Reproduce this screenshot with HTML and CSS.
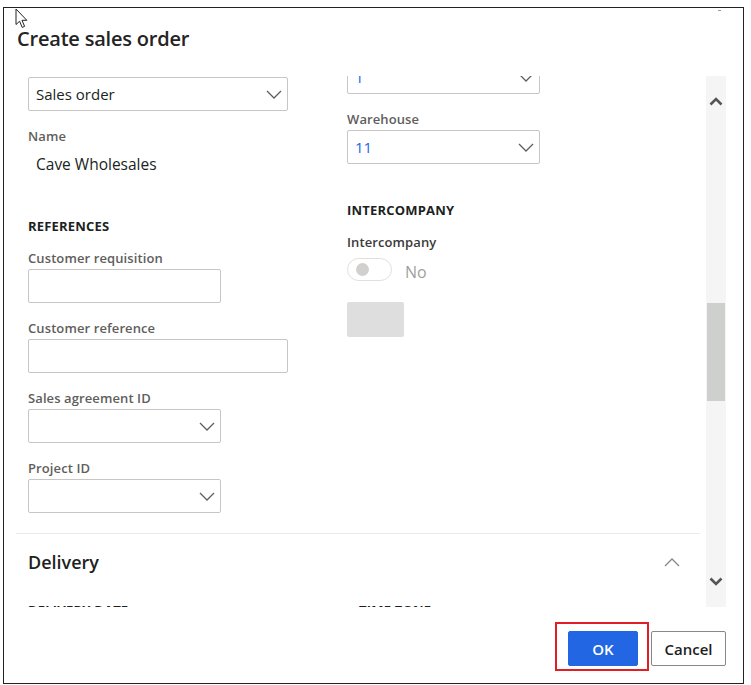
FILE: index.html
```html
<!DOCTYPE html>
<html lang="en">
<head>
<meta charset="utf-8">
<title>Create sales order</title>
<link rel="stylesheet" href="styles.css">
</head>
<body>
<div class="dialog">
  <svg class="cursor" width="13" height="21" viewBox="0 0 13 21" aria-hidden="true">
    <path d="M1 1 L1 16.5 L4.6 13.2 L7.2 19.4 L9.6 18.4 L7 12.3 L11.8 12.3 Z" fill="#fff" stroke="#222" stroke-width="1" stroke-linejoin="round"/>
  </svg>
  <span class="close-mark"></span>
  <header class="dlg-header">
    <h1 class="dlg-title">Create sales order</h1>
  </header>
  <div class="dlg-main">
    <div class="viewport">
      <section class="general">
        <div class="col col-left">
          <div class="control select wide">
            <span class="value">Sales order</span>
            <svg class="chev" width="16" height="9" viewBox="0 0 16 9"><polyline points="1,1 8,8 15,1" fill="none" stroke="#605e5c" stroke-width="1.3"/></svg>
          </div>
          <div class="field">
            <label class="field-label">Name</label>
            <div class="static">Cave Wholesales</div>
          </div>
          <div class="group">
            <h3 class="group-title">REFERENCES</h3>
            <div class="field">
              <label class="field-label">Customer requisition</label>
              <div class="control input narrow"></div>
            </div>
            <div class="field">
              <label class="field-label">Customer reference</label>
              <div class="control input wide"></div>
            </div>
            <div class="field">
              <label class="field-label">Sales agreement ID</label>
              <div class="control select narrow">
                <span class="value"></span>
                <svg class="chev" width="16" height="9" viewBox="0 0 16 9"><polyline points="1,1 8,8 15,1" fill="none" stroke="#605e5c" stroke-width="1.3"/></svg>
              </div>
            </div>
            <div class="field">
              <label class="field-label">Project ID</label>
              <div class="control select narrow">
                <span class="value"></span>
                <svg class="chev" width="16" height="9" viewBox="0 0 16 9"><polyline points="1,1 8,8 15,1" fill="none" stroke="#605e5c" stroke-width="1.3"/></svg>
              </div>
            </div>
          </div>
        </div>
        <div class="col col-right">
          <div class="control select narrow">
            <span class="value link">1</span>
            <svg class="chev" width="16" height="9" viewBox="0 0 16 9"><polyline points="1,1 8,8 15,1" fill="none" stroke="#605e5c" stroke-width="1.3"/></svg>
          </div>
          <div class="field">
            <label class="field-label">Warehouse</label>
            <div class="control select narrow">
              <span class="value link">11</span>
              <svg class="chev" width="16" height="9" viewBox="0 0 16 9"><polyline points="1,1 8,8 15,1" fill="none" stroke="#605e5c" stroke-width="1.3"/></svg>
            </div>
          </div>
          <div class="group">
            <h3 class="group-title">INTERCOMPANY</h3>
            <div class="field">
              <label class="field-label strong">Intercompany</label>
              <div class="toggle-row">
                <span class="toggle"><span class="knob"></span></span>
                <span class="toggle-text">No</span>
              </div>
            </div>
            <div class="blank-btn"></div>
          </div>
        </div>
      </section>
      <section class="fasttab">
        <div class="fasttab-head">
          <h2 class="fasttab-title">Delivery</h2>
          <svg width="16" height="9" viewBox="0 0 16 9"><polyline points="1,8 8,1 15,8" fill="none" stroke="#8a8886" stroke-width="1.3"/></svg>
        </div>
        <div class="fasttab-body">
          <h3 class="group-title">DELIVERY DATE</h3>
          <h3 class="group-title">TIME ZONE</h3>
        </div>
      </section>
    </div>
    <div class="scrollbar">
      <div class="sb-arrow">
        <svg width="14" height="9" viewBox="0 0 14 9"><polyline points="1.5,7.5 7,2 12.5,7.5" fill="none" stroke="#555" stroke-width="2.6"/></svg>
      </div>
      <div class="sb-thumb"></div>
      <div class="sb-space"></div>
      <div class="sb-arrow down">
        <svg width="14" height="9" viewBox="0 0 14 9"><polyline points="1.5,1.5 7,7 12.5,1.5" fill="none" stroke="#555" stroke-width="2.6"/></svg>
      </div>
    </div>
  </div>
  <footer class="dlg-footer">
    <div class="ok-wrap">
      <button class="btn primary" type="button">OK</button>
      <span class="highlight"></span>
    </div>
    <button class="btn secondary" type="button">Cancel</button>
  </footer>
</div>
</body>
</html>
```
FILE: styles.css
```css
* { box-sizing: border-box; }

html, body {
  margin: 0;
  padding: 0;
  background: #fff;
}

body {
  font-family: "Open Sans", "Noto Sans", "Liberation Sans", sans-serif;
  color: #201f1e;
}

.dialog {
  position: relative;
  margin: 7px 0 0 3px;
  width: 741px;
  height: 677px;
  border: 1px solid #222;
  display: flex;
  flex-direction: column;
  background: #fff;
}

.cursor {
  position: absolute;
  left: 11px;
  top: 0;
}

.close-mark {
  position: absolute;
  right: 22px;
  top: 2px;
  width: 3px;
  height: 1px;
  background: #999;
}

.dlg-header {
  height: 68px;
  padding: 17px 0 0 13px;
}

.dlg-title {
  margin: 0;
  font-size: 20px;
  line-height: 28px;
  font-weight: 600;
  color: #242424;
  letter-spacing: -0.2px;
}

.dlg-main {
  height: 531px;
  display: flex;
  gap: 6px;
  padding: 0 17px 0 12px;
}

.viewport {
  flex: 1;
  overflow: hidden;
}

.general {
  display: grid;
  grid-template-columns: 319px 1fr;
  padding: 1px 0 20px 12px;
  border-bottom: 1px solid #edebe9;
}

.col { display: flex; flex-direction: column; align-items: flex-start; }

.col-right { margin-top: -17px; }

.field { margin-top: 15px; display: flex; flex-direction: column; align-items: flex-start; }

.field-label {
  font-size: 13px;
  line-height: 20px;
  font-weight: 600;
  color: #605e5c;
  margin-bottom: 1px;
  letter-spacing: 0.1px;
}

.field-label.strong { color: #3b3a39; }

.control {
  height: 34px;
  border: 1px solid #c8c6c4;
  border-radius: 2px;
  display: flex;
  align-items: center;
  padding: 0 4px 0 7px;
  background: #fff;
}

.control.wide { width: 260px; }
.control.narrow { width: 193px; }

.value {
  flex: 1;
  font-size: 15px;
  color: #201f1e;
}

.value.link { color: #2266e3; }

.chev { margin-right: 1px; }

.static {
  height: 34px;
  line-height: 34px;
  padding-left: 8px;
  font-size: 15.5px;
  color: #201f1e;
}

.group { margin-top: 35px; display: flex; flex-direction: column; align-items: flex-start; }

.col-right .group { margin-top: 36px; }

.group-title {
  margin: 0;
  font-size: 13px;
  line-height: 20px;
  font-weight: 700;
  color: #201f1e;
  letter-spacing: 0.2px;
}

.group-title + .field { margin-top: 12px; }

.toggle-row {
  margin-top: 5px;
  display: flex;
  align-items: flex-start;
  gap: 13px;
}

.toggle {
  width: 45px;
  height: 23px;
  border: 1px solid #e1dfdd;
  border-radius: 12px;
  display: flex;
  align-items: center;
  padding-left: 8px;
}

.knob {
  width: 13px;
  height: 13px;
  border-radius: 50%;
  background: #d2d0ce;
}

.toggle-text {
  font-size: 16px;
  line-height: 20px;
  color: #a19f9d;
  padding-top: 4px;
}

.blank-btn {
  margin-top: 20px;
  width: 57px;
  height: 35px;
  background: #dedede;
  border-radius: 2px;
}

.fasttab-head {
  height: 56px;
  display: flex;
  align-items: center;
  justify-content: space-between;
  padding: 0 20px 0 12px;
}

.fasttab-title {
  margin: 0;
  font-size: 18px;
  font-weight: 600;
  color: #201f1e;
}

.fasttab-body {
  display: grid;
  grid-template-columns: 331px 1fr;
  padding: 10px 0 0 12px;
}

.scrollbar {
  width: 20px;
  background: #f5f5f5;
  display: flex;
  flex-direction: column;
}

.sb-arrow {
  height: 50px;
  display: flex;
  align-items: center;
  justify-content: center;
}

.sb-arrow.down { height: 52px; }

.sb-thumb {
  margin: 177px 1px 0;
  height: 98px;
  background: #cdd0cd;
}

.sb-space { flex: 1; }

.dlg-footer {
  flex: 1;
  display: flex;
  justify-content: flex-end;
  align-items: flex-start;
  gap: 13px;
  padding: 24px 17px 0 0;
}

.ok-wrap { position: relative; }

.btn {
  height: 35px;
  border-radius: 2px;
  font-family: inherit;
  font-size: 15px;
  font-weight: 600;
  cursor: default;
}

.btn.primary {
  width: 70px;
  background: #2266e3;
  border: 1px solid #2266e3;
  color: #fff;
}

.btn.secondary {
  width: 75px;
  background: #fff;
  border: 1px solid #8a8886;
  color: #201f1e;
}

.highlight {
  position: absolute;
  left: -13px;
  right: -11px;
  top: -9px;
  bottom: -5px;
  border: 2px solid #e01e26;
  pointer-events: none;
}
```
